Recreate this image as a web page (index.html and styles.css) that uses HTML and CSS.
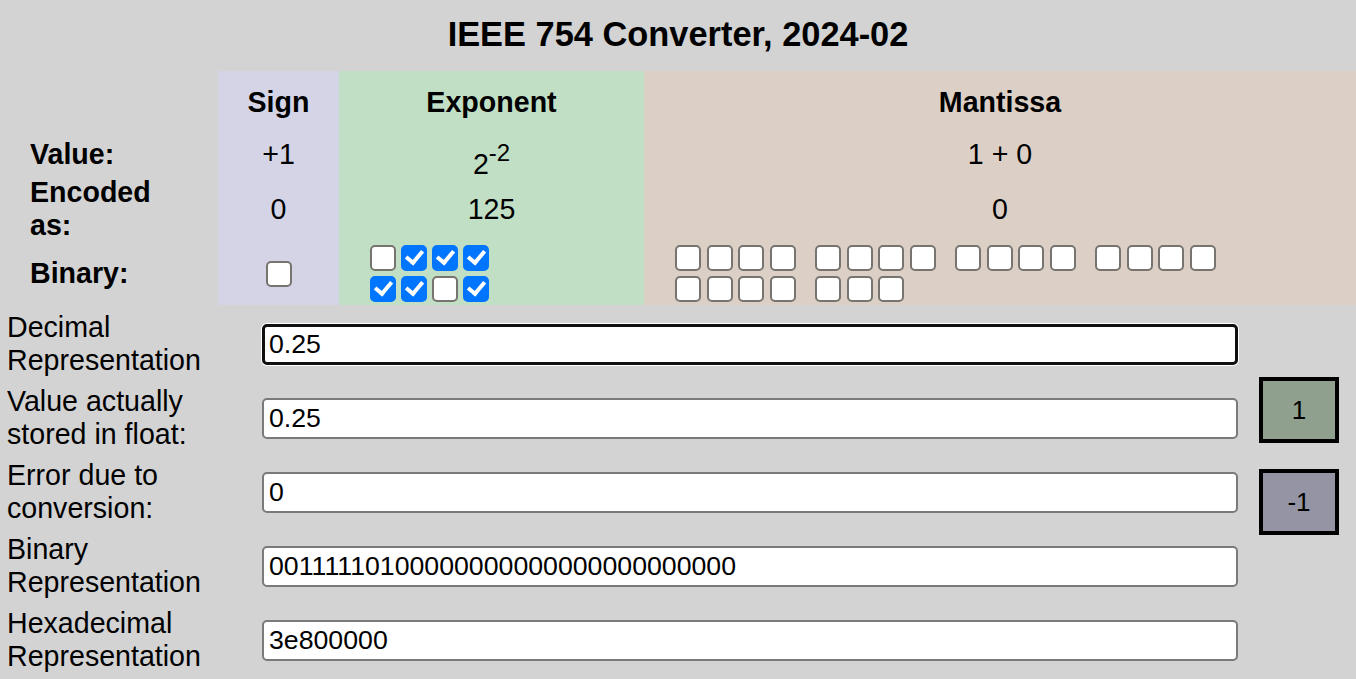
FILE: index.html
```html
<!doctype html>
<html>
<head>
	<title>IEEE 754 Converter</title>
	<link rel="stylesheet" href="styles.css">
</head>
<body>
<h1 class="title">IEEE 754 Converter, 2024-02</h1>
<div class="fields">
	<div class="corner"></div>
	<div class="head sign">Sign</div>
	<div class="head expo">Exponent</div>
	<div class="head mant">Mantissa</div>

	<div class="rowlabel">Value:</div>
	<div class="cell sign">+1</div>
	<div class="cell expo"><span>2<sup>-2</sup></span></div>
	<div class="cell mant">1 + 0</div>

	<div class="rowlabel">Encoded as:</div>
	<div class="cell sign">0</div>
	<div class="cell expo">125</div>
	<div class="cell mant">0</div>

	<div class="rowlabel">Binary:</div>
	<div class="cell sign"><input type="checkbox" class="bit"></div>
	<div class="bits expo">
		<div class="bitrow">
			<div class="group">
				<input type="checkbox" class="bit">
				<input type="checkbox" class="bit" checked>
				<input type="checkbox" class="bit" checked>
				<input type="checkbox" class="bit" checked>
			</div>
		</div>
		<div class="bitrow">
			<div class="group">
				<input type="checkbox" class="bit" checked>
				<input type="checkbox" class="bit" checked>
				<input type="checkbox" class="bit">
				<input type="checkbox" class="bit" checked>
			</div>
		</div>
	</div>
	<div class="bits mant">
		<div class="bitrow">
			<div class="group">
				<input type="checkbox" class="bit"><input type="checkbox" class="bit"><input type="checkbox" class="bit"><input type="checkbox" class="bit">
			</div>
			<div class="group">
				<input type="checkbox" class="bit"><input type="checkbox" class="bit"><input type="checkbox" class="bit"><input type="checkbox" class="bit">
			</div>
			<div class="group">
				<input type="checkbox" class="bit"><input type="checkbox" class="bit"><input type="checkbox" class="bit"><input type="checkbox" class="bit">
			</div>
			<div class="group">
				<input type="checkbox" class="bit"><input type="checkbox" class="bit"><input type="checkbox" class="bit"><input type="checkbox" class="bit">
			</div>
		</div>
		<div class="bitrow">
			<div class="group">
				<input type="checkbox" class="bit"><input type="checkbox" class="bit"><input type="checkbox" class="bit"><input type="checkbox" class="bit">
			</div>
			<div class="group">
				<input type="checkbox" class="bit"><input type="checkbox" class="bit"><input type="checkbox" class="bit">
			</div>
		</div>
	</div>
</div>

<div class="form">
	<label class="flabel" for="decimal">Decimal Representation</label>
	<input class="num focused" id="decimal" value="0.25">

	<label class="flabel" for="stored">Value actually stored in float:</label>
	<input class="num" id="stored" value="0.25">

	<label class="flabel" for="error">Error due to conversion:</label>
	<input class="num" id="error" value="0">

	<label class="flabel" for="binary">Binary Representation</label>
	<input class="num" id="binary" value="00111110100000000000000000000000">

	<label class="flabel" for="hex">Hexadecimal Representation</label>
	<input class="num" id="hex" value="3e800000">

	<div class="adjust">
		<button class="step plus">1</button>
		<button class="step minus">-1</button>
	</div>
</div>
</body>
</html>
```

FILE: styles.css
```css
* {
    margin: 0;
    padding: 0;
    box-sizing: border-box;
}

body {
    background: #d3d3d3;
    font: 28.6px "Liberation Sans", Arial, sans-serif;
    color: #000;
}

.title {
    height: 71px;
    line-height: 68px;
    font-size: 34.4px;
    font-weight: bold;
    text-align: center;
}

/* top table */
.fields {
    display: grid;
    grid-template-columns: 218px 121px 305px 1fr;
    grid-template-rows: 62px 43px 66px 63px;
}

.sign { background: #d4d4e6; }
.expo { background: #c1dfc4; }
.mant { background: #dcd0c6; }

.head, .cell {
    display: flex;
    align-items: center;
    justify-content: center;
    text-align: center;
}

.head {
    font-weight: bold;
}

.cell sup {
    font-size: 24px;
    line-height: 1;
    vertical-align: 13px;
}

.cell span {
    padding-top: 12px;
}

.rowlabel {
    display: flex;
    align-items: center;
    padding: 0 40px 0 30px;
    font-weight: bold;
    line-height: 33px;
}

.bits {
    display: flex;
    flex-direction: column;
    justify-content: center;
    gap: 5px;
    padding-left: 31px;
}

.bitrow {
    display: flex;
    gap: 19.5px;
}

.group {
    display: flex;
    gap: 5px;
}

.mant .group {
    gap: 5.5px;
}

.bit {
    appearance: none;
    -webkit-appearance: none;
    position: relative;
    width: 26px;
    height: 26px;
    border: 2px solid #777470;
    border-radius: 5px;
    background: #fff;
}

.bit:checked {
    background: #0075ff;
    border-color: #0075ff;
}

.bit:checked::after {
    content: "";
    position: absolute;
    left: 6px;
    top: 0;
    width: 7px;
    height: 13px;
    border: solid #fff;
    border-width: 0 4px 4px 0;
    transform: rotate(40deg);
}

/* lower form */
.form {
    display: grid;
    grid-template-columns: 255px 976px 1fr;
    grid-auto-rows: 74px;
    margin-top: 2px;
    padding-left: 7px;
}

.flabel {
    grid-column: 1;
    align-self: center;
    line-height: 33px;
}

.num {
    grid-column: 2;
    align-self: center;
    height: 41px;
    padding: 0 5px;
    border: 2px solid #7a7a7a;
    border-radius: 5px;
    background: #fff;
    font: 26.7px "Liberation Sans", Arial, sans-serif;
    color: #000;
}

.num.focused {
    border: 3px solid #101010;
    padding: 0 4px;
    box-shadow: 0 0 0 1px #fff;
    outline: none;
}

.adjust {
    grid-column: 3;
    grid-row: 2 / span 2;
    align-self: start;
    display: flex;
    flex-direction: column;
    gap: 26px;
    margin-top: -4px;
    padding-left: 21px;
}

.step {
    width: 80px;
    height: 66px;
    border: 4px solid #000;
    font: 26px "Liberation Sans", Arial, sans-serif;
    color: #000;
}

.plus { background: #8fa08f; }
.minus { background: #9494a4; }
```
